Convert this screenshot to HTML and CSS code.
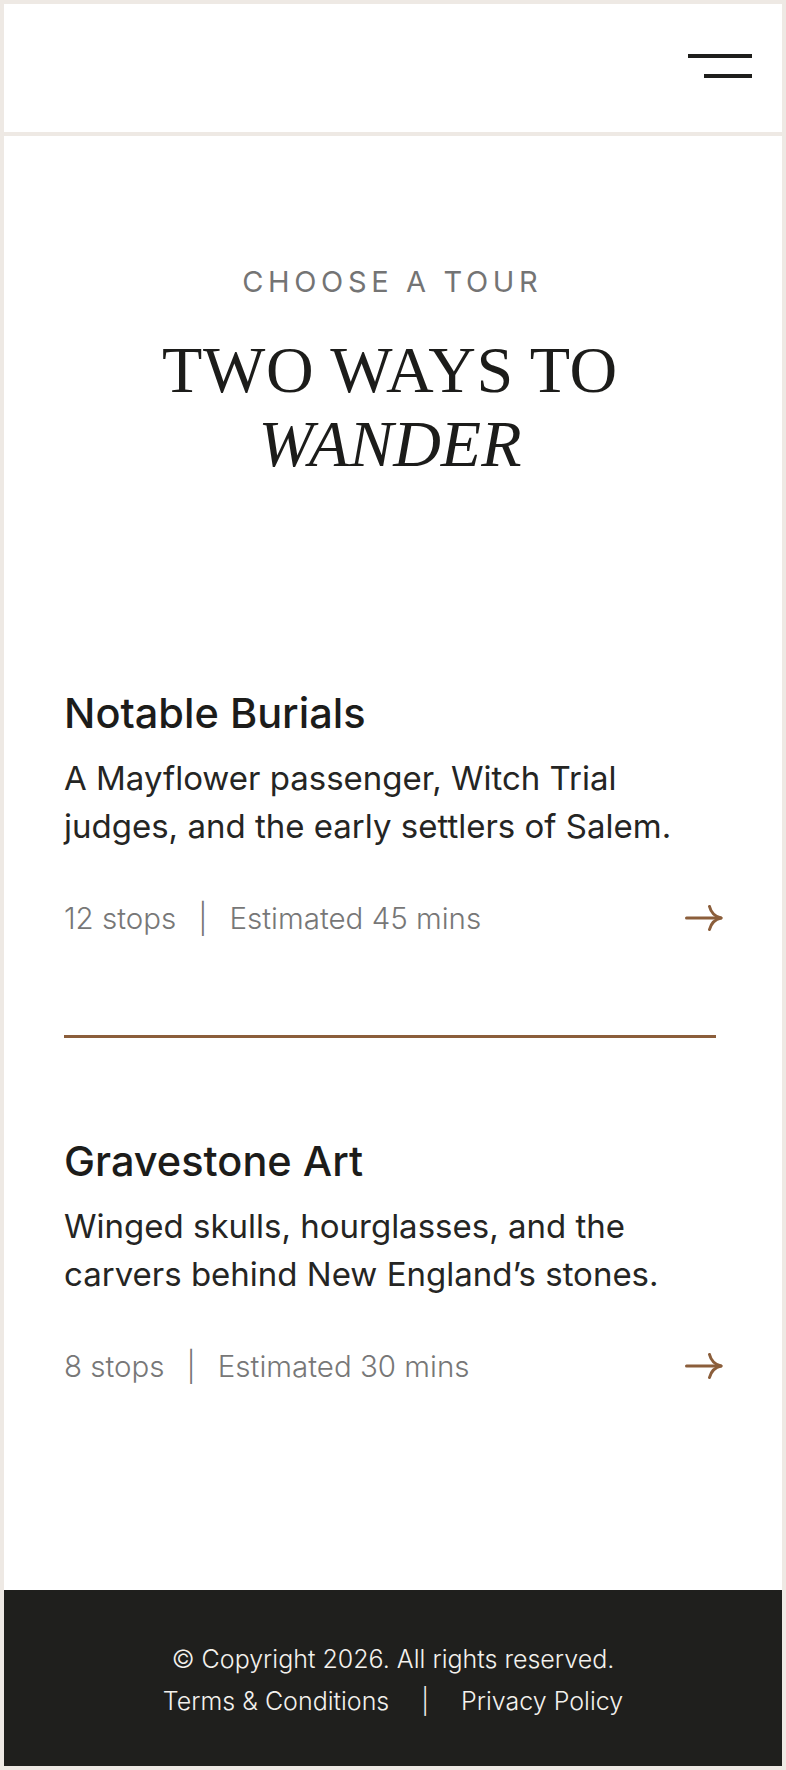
FILE: index.html
```html
<!DOCTYPE html>
<html lang="en">
<head>
<meta charset="utf-8">
<title>Choose a Tour</title>
<link rel="stylesheet" href="styles.css">
</head>
<body>
<div class="page">
  <header class="site-header">
    <button class="menu-btn" type="button" aria-label="Open menu">
      <span class="bar bar-long"></span>
      <span class="bar bar-short"></span>
    </button>
  </header>

  <main class="main">
    <section class="intro">
      <p class="eyebrow">CHOOSE A TOUR</p>
      <h1 class="headline"><span class="headline-line">TWO WAYS TO</span><em class="headline-line headline-em">WANDER</em></h1>
    </section>

    <ul class="tours">
      <li class="tour tour-divided">
        <h2 class="tour-title">Notable Burials</h2>
        <p class="tour-desc">A Mayflower passenger, Witch Trial judges, and the early settlers of Salem.</p>
        <div class="tour-meta">
          <p class="meta-text"><span>12 stops</span><span class="meta-sep">|</span><span>Estimated 45 mins</span></p>
          <a class="tour-arrow" href="#" aria-label="Start Notable Burials tour">
            <svg width="38" height="26" viewBox="0 0 38 26" fill="none" stroke="currentColor" stroke-width="3" stroke-linecap="round" stroke-linejoin="round"><path d="M1.5 13H36"/><path d="M24.5 1.5C26 7.5 29.5 11.5 36 13C29.5 14.5 26 18.5 24.5 24.5"/></svg>
          </a>
        </div>
      </li>
      <li class="tour">
        <h2 class="tour-title">Gravestone Art</h2>
        <p class="tour-desc">Winged skulls, hourglasses, and the carvers behind New England’s stones.</p>
        <div class="tour-meta">
          <p class="meta-text"><span>8 stops</span><span class="meta-sep">|</span><span>Estimated 30 mins</span></p>
          <a class="tour-arrow" href="#" aria-label="Start Gravestone Art tour">
            <svg width="38" height="26" viewBox="0 0 38 26" fill="none" stroke="currentColor" stroke-width="3" stroke-linecap="round" stroke-linejoin="round"><path d="M1.5 13H36"/><path d="M24.5 1.5C26 7.5 29.5 11.5 36 13C29.5 14.5 26 18.5 24.5 24.5"/></svg>
          </a>
        </div>
      </li>
    </ul>
  </main>

  <footer class="site-footer">
    <p class="copyright">© Copyright 2026. All rights reserved.</p>
    <nav class="footer-links">
      <a href="#">Terms &amp; Conditions</a>
      <span class="footer-sep">|</span>
      <a href="#">Privacy Policy</a>
    </nav>
  </footer>
</div>
</body>
</html>
```

FILE: styles.css
```css
* { box-sizing: border-box; }

html, body { margin: 0; padding: 0; }

body {
  background: #eee9e4;
  padding: 4px;
  font-family: Inter, "Noto Sans", "Liberation Sans", sans-serif;
  color: #1e1e1c;
}

.page {
  min-height: 1762px;
  display: flex;
  flex-direction: column;
}

/* Header */
.site-header {
  height: 128px;
  margin-bottom: 4px;
  background: #ffffff;
  display: flex;
  justify-content: flex-end;
  align-items: flex-start;
  padding: 50px 30px 0 0;
}

.menu-btn {
  display: flex;
  flex-direction: column;
  align-items: flex-end;
  gap: 16px;
  padding: 0;
  border: 0;
  background: none;
  cursor: pointer;
}

.bar {
  display: block;
  height: 4px;
  background: #1e1e1c;
}
.bar-long { width: 64px; }
.bar-short { width: 48px; }

/* Main */
.main {
  flex: 1;
  background: #ffffff;
  padding: 0 66px 0 60px;
}

.intro {
  padding-top: 129px;
  text-align: center;
}

.eyebrow {
  margin: 0;
  font-size: 29px;
  line-height: 34px;
  letter-spacing: 0.16em;
  color: #747474;
  padding-left: 0.16em;
}

.headline {
  margin: 34px 0 0;
  font-family: "Liberation Serif", "Times New Roman", serif;
  font-weight: 400;
  font-size: 66px;
  line-height: 74px;
  letter-spacing: 0.01em;
  color: #1c1c1a;
}

.headline-line { display: block; }
.headline-em { font-style: italic; letter-spacing: 0; }

.tours {
  list-style: none;
  margin: 208px 0 0;
  padding: 0;
}

.tour {
  padding: 99px 0 100px;
}
.tours .tour:first-child { padding-top: 0; }

.tour-divided {
  border-bottom: 3px solid #8b5e3b;
}

.tour-title {
  margin: 0;
  font-size: 41.5px;
  line-height: 48px;
  font-weight: 500;
  color: #1c1c1a;
}

.tour-desc {
  margin: 17px 0 0;
  max-width: 630px;
  font-size: 33px;
  line-height: 48px;
  font-weight: 400;
  color: #252523;
}

.tour-meta {
  margin-top: 51px;
  display: flex;
  align-items: center;
  justify-content: space-between;
}

.meta-text {
  margin: 0;
  display: flex;
  gap: 22px;
  font-size: 29.5px;
  line-height: 34px;
  font-weight: 300;
  color: #777777;
}

.tour-arrow {
  display: flex;
  color: #8b5e3b;
  margin-right: -7px;
}

/* Footer */
.site-footer {
  background: #1f1f1d;
  color: #f3f1ed;
  padding: 48px 0 44px;
  text-align: center;
  font-size: 25px;
  line-height: 42px;
  font-weight: 300;
}

.copyright { margin: 0; }

.footer-links {
  display: flex;
  justify-content: center;
  gap: 32px;
}

.footer-links a {
  color: #f3f1ed;
  text-decoration: none;
}
```
